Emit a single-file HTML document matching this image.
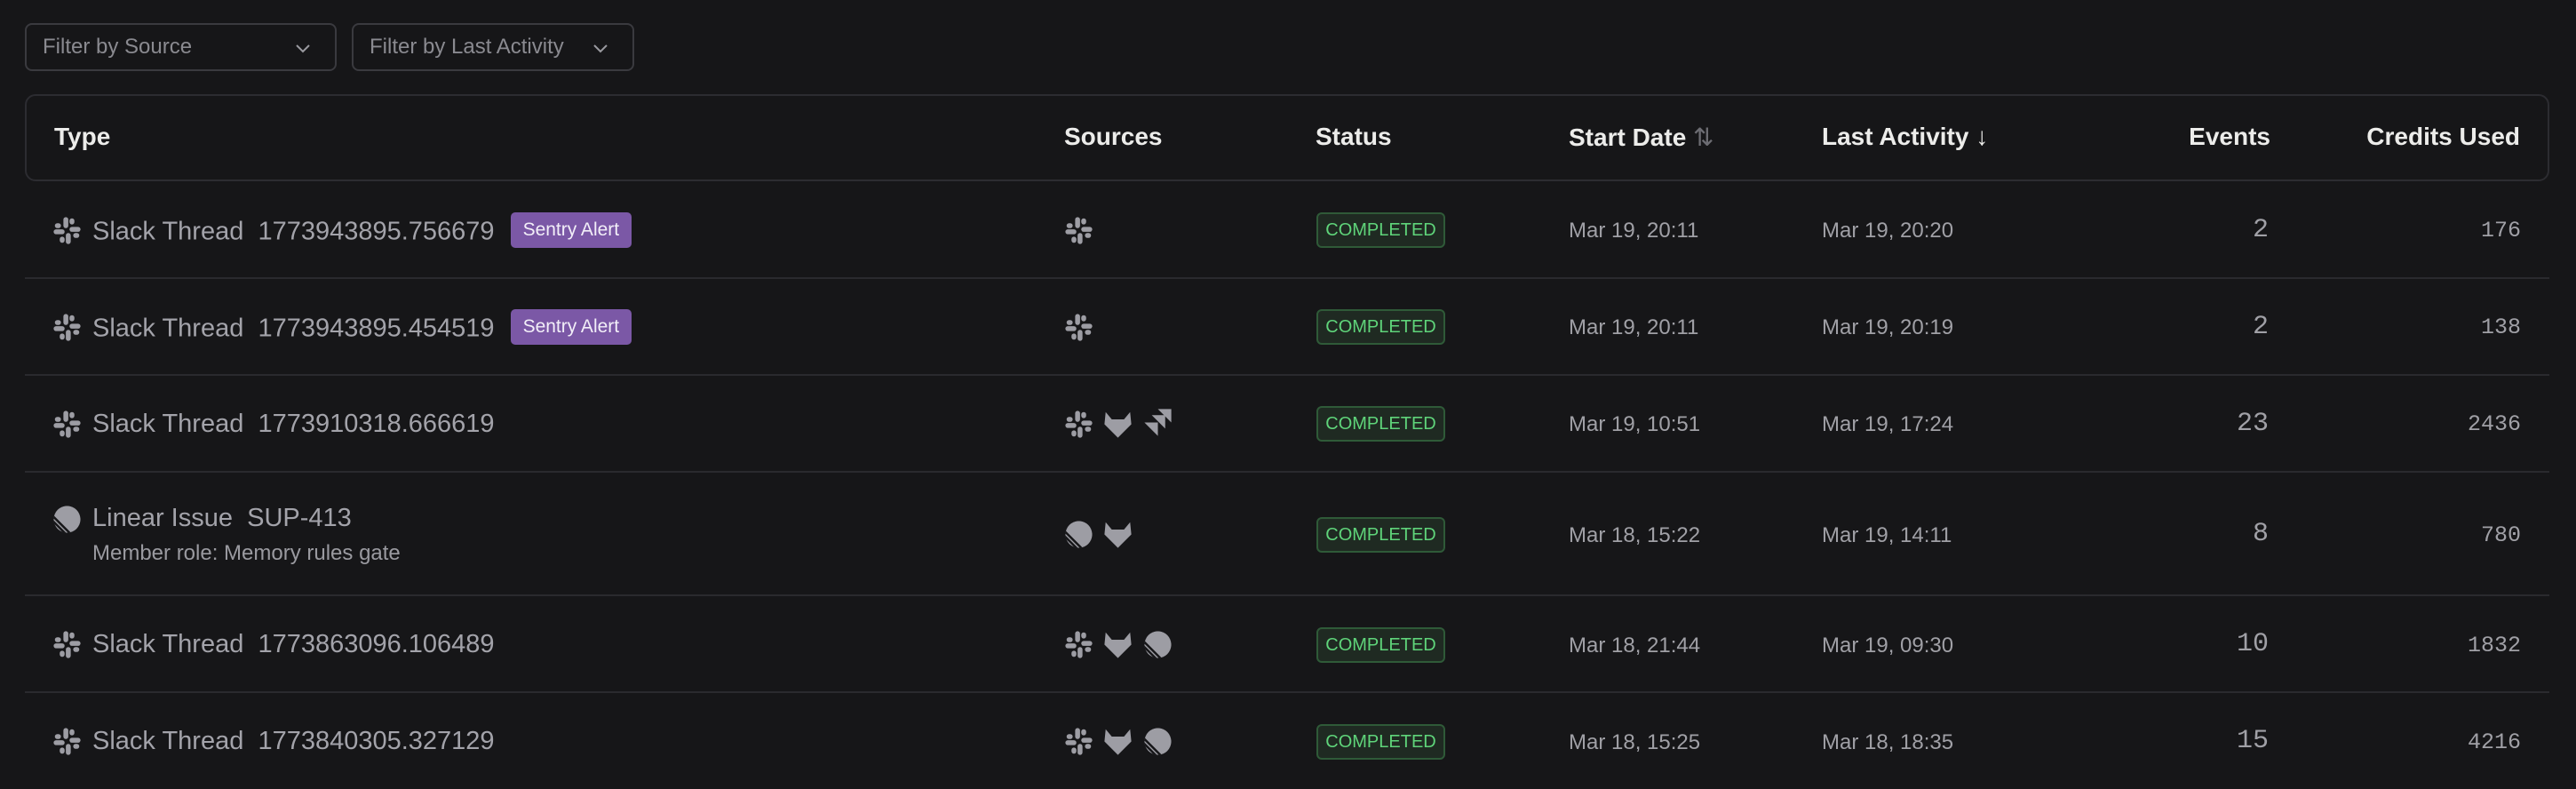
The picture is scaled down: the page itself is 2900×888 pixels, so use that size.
<!DOCTYPE html>
<html><head><meta charset="utf-8">
<style>
*{box-sizing:border-box;margin:0;padding:0}
body{width:2900px;height:888px;background:#161618;font-family:"Liberation Sans",sans-serif;overflow:hidden;position:relative;color:#a3a3aa}
.abs{position:absolute;white-space:nowrap}
.filter{position:absolute;top:26px;height:54px;border:2px solid #3a3a3f;border-radius:8px;color:#8a8a90;font-size:24px;line-height:50px;padding-left:18px;white-space:nowrap}
.filter svg{position:absolute;right:26px;top:16px}
.head{position:absolute;left:28px;top:106px;width:2842px;height:98px;border:2px solid #2c2c31;border-radius:12px}
.h{position:absolute;top:138px;font-size:28px;font-weight:bold;color:#ececea;white-space:nowrap}
.sep{position:absolute;left:28px;width:2842px;height:2px;background:#2a2a2e}
.title{font-size:29px;color:#a3a3aa}
.date{font-size:24px;color:#a0a0a6}
.mono{font-family:"Liberation Mono",monospace;color:#a0a0a6}
.badge{position:absolute;left:1482px;width:145px;height:40px;border:2px solid #2f5a38;background:#1f2a22;border-radius:6px;color:#5fd47a;font-size:20px;text-align:center;line-height:36px}
.sentry{display:inline-block;background:#7b58a6;color:#f2eef8;font-size:21px;border-radius:5px;padding:0 14px;height:40px;line-height:40px;vertical-align:middle;margin-left:18px;position:relative;top:-3px}
</style></head><body>
<svg width="0" height="0" style="position:absolute">
<defs>
<clipPath id="lc"><circle cx="12" cy="12" r="11"/></clipPath>
<symbol id="slack" viewBox="0 0 24 24"><g fill="#9d9da4">
<rect x="9" y="1" width="4" height="9" rx="2"/><rect x="14" y="9" width="9" height="4" rx="2"/><rect x="11" y="14" width="4" height="9" rx="2"/><rect x="1" y="11" width="9" height="4" rx="2"/>
<rect x="14" y="2" width="4" height="5" rx="2"/><rect x="17" y="14" width="5" height="4" rx="2"/><rect x="6" y="17" width="4" height="5" rx="2"/><rect x="2" y="6" width="5" height="4" rx="2"/>
</g></symbol>
<symbol id="gitlab" viewBox="0 0 24 24"><path fill="#9d9da4" d="M2 2 L7 8 H17 L22 2 L23 12 L12 23 L1 12 Z"/></symbol>
<symbol id="jira" viewBox="0 0 24 24"><g fill="#9d9da4"><path d="M12 1 H23 V12 Z"/><path d="M7 6 H18 V17 L12 11 Z"/><path d="M1 12 H12 V23 L6 17 Z"/></g></symbol>
<symbol id="linear" viewBox="0 0 24 24"><g clip-path="url(#lc)"><circle cx="12" cy="12" r="11" fill="#9d9da4"/><g stroke="#161618" stroke-width="1.8"><line x1="-2" y1="7" x2="17" y2="26"/><line x1="-2" y1="11" x2="13" y2="26"/><line x1="-2" y1="15" x2="9" y2="26"/></g></g></symbol>
</defs></svg>

<div class="filter" style="left:28px;width:351px">Filter by Source<svg width="20" height="20" viewBox="0 0 20 20"><path d="M3 7 L10 14 L17 7" fill="none" stroke="#9a9aa0" stroke-width="2"/></svg></div>
<div class="filter" style="left:396px;width:318px">Filter by Last Activity<svg width="20" height="20" viewBox="0 0 20 20"><path d="M3 7 L10 14 L17 7" fill="none" stroke="#9a9aa0" stroke-width="2"/></svg></div>

<div class="head"></div>
<div class="h" style="left:61px">Type</div>
<div class="h" style="left:1198px">Sources</div>
<div class="h" style="left:1481px">Status</div>
<div class="h" style="left:1766px">Start Date <span style="color:#6c6c72;font-weight:normal">⇅</span></div>
<div class="h" style="left:2051px">Last Activity <span style="font-weight:normal">↓</span></div>
<div class="h" style="right:344px">Events</div>
<div class="h" style="right:63px">Credits Used</div>

<div class="sep" style="top:312px"></div>
<div class="sep" style="top:421px"></div>
<div class="sep" style="top:530px"></div>
<div class="sep" style="top:669px"></div>
<div class="sep" style="top:778px"></div>

<!-- row 1 -->
<svg class="abs" style="left:59px;top:243px" width="33" height="33"><use href="#slack"/></svg>
<div class="abs title" style="left:104px;top:242px">Slack Thread&nbsp; 1773943895.756679<span class="sentry">Sentry Alert</span></div>
<svg class="abs" style="left:1198px;top:243px" width="33" height="33"><use href="#slack"/></svg>
<div class="badge" style="top:239px">COMPLETED</div>
<div class="abs date" style="left:1766px;top:246px">Mar 19, 20:11</div>
<div class="abs date" style="left:2051px;top:246px">Mar 19, 20:20</div>
<div class="abs mono" style="right:346px;top:242px;font-size:30px">2</div>
<div class="abs mono" style="right:62px;top:245px;font-size:25px">176</div>

<!-- row 2 -->
<svg class="abs" style="left:59px;top:352px" width="33" height="33"><use href="#slack"/></svg>
<div class="abs title" style="left:104px;top:351px">Slack Thread&nbsp; 1773943895.454519<span class="sentry">Sentry Alert</span></div>
<svg class="abs" style="left:1198px;top:352px" width="33" height="33"><use href="#slack"/></svg>
<div class="badge" style="top:348px">COMPLETED</div>
<div class="abs date" style="left:1766px;top:355px">Mar 19, 20:11</div>
<div class="abs date" style="left:2051px;top:355px">Mar 19, 20:19</div>
<div class="abs mono" style="right:346px;top:351px;font-size:30px">2</div>
<div class="abs mono" style="right:62px;top:354px;font-size:25px">138</div>

<!-- row 3 -->
<svg class="abs" style="left:59px;top:461px" width="33" height="33"><use href="#slack"/></svg>
<div class="abs title" style="left:104px;top:461px">Slack Thread&nbsp; 1773910318.666619</div>
<svg class="abs" style="left:1198px;top:461px" width="33" height="33"><use href="#slack"/></svg>
<svg class="abs" style="left:1242px;top:461px" width="33" height="33"><use href="#gitlab"/></svg>
<svg class="abs" style="left:1287px;top:459px" width="33" height="33"><use href="#jira"/></svg>
<div class="badge" style="top:457px">COMPLETED</div>
<div class="abs date" style="left:1766px;top:464px">Mar 19, 10:51</div>
<div class="abs date" style="left:2051px;top:464px">Mar 19, 17:24</div>
<div class="abs mono" style="right:346px;top:460px;font-size:30px">23</div>
<div class="abs mono" style="right:62px;top:463px;font-size:25px">2436</div>

<!-- row 4 -->
<svg class="abs" style="left:59px;top:568px" width="33" height="33"><use href="#linear"/></svg>
<div class="abs title" style="left:104px;top:567px">Linear Issue&nbsp; SUP-413</div>
<div class="abs" style="left:104px;top:609px;font-size:24px;color:#9a9aa0">Member role: Memory rules gate</div>
<svg class="abs" style="left:1198px;top:585px" width="33" height="33"><use href="#linear"/></svg>
<svg class="abs" style="left:1242px;top:585px" width="33" height="33"><use href="#gitlab"/></svg>
<div class="badge" style="top:582px">COMPLETED</div>
<div class="abs date" style="left:1766px;top:589px">Mar 18, 15:22</div>
<div class="abs date" style="left:2051px;top:589px">Mar 19, 14:11</div>
<div class="abs mono" style="right:346px;top:584px;font-size:30px">8</div>
<div class="abs mono" style="right:62px;top:588px;font-size:25px">780</div>

<!-- row 5 -->
<svg class="abs" style="left:59px;top:709px" width="33" height="33"><use href="#slack"/></svg>
<div class="abs title" style="left:104px;top:709px">Slack Thread&nbsp; 1773863096.106489</div>
<svg class="abs" style="left:1198px;top:709px" width="33" height="33"><use href="#slack"/></svg>
<svg class="abs" style="left:1242px;top:709px" width="33" height="33"><use href="#gitlab"/></svg>
<svg class="abs" style="left:1287px;top:709px" width="33" height="33"><use href="#linear"/></svg>
<div class="badge" style="top:706px">COMPLETED</div>
<div class="abs date" style="left:1766px;top:713px">Mar 18, 21:44</div>
<div class="abs date" style="left:2051px;top:713px">Mar 19, 09:30</div>
<div class="abs mono" style="right:346px;top:708px;font-size:30px">10</div>
<div class="abs mono" style="right:62px;top:712px;font-size:25px">1832</div>

<!-- row 6 -->
<svg class="abs" style="left:59px;top:818px" width="33" height="33"><use href="#slack"/></svg>
<div class="abs title" style="left:104px;top:818px">Slack Thread&nbsp; 1773840305.327129</div>
<svg class="abs" style="left:1198px;top:818px" width="33" height="33"><use href="#slack"/></svg>
<svg class="abs" style="left:1242px;top:818px" width="33" height="33"><use href="#gitlab"/></svg>
<svg class="abs" style="left:1287px;top:818px" width="33" height="33"><use href="#linear"/></svg>
<div class="badge" style="top:815px">COMPLETED</div>
<div class="abs date" style="left:1766px;top:822px">Mar 18, 15:25</div>
<div class="abs date" style="left:2051px;top:822px">Mar 18, 18:35</div>
<div class="abs mono" style="right:346px;top:817px;font-size:30px">15</div>
<div class="abs mono" style="right:62px;top:821px;font-size:25px">4216</div>
</body></html>
